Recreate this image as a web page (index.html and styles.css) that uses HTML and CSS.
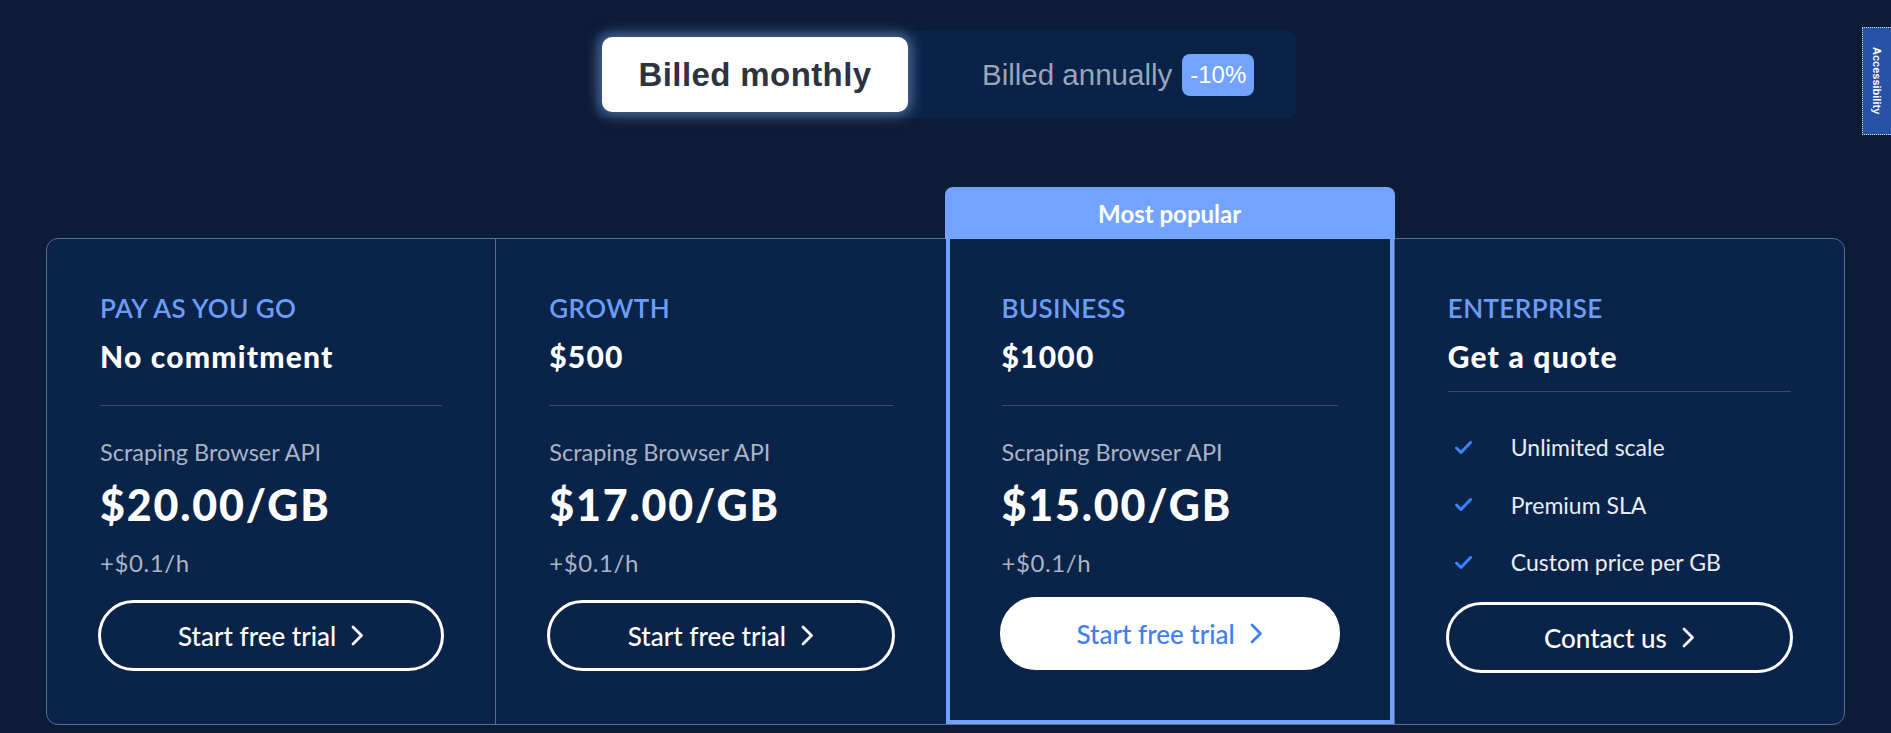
FILE: index.html
```html
<!DOCTYPE html>
<html>
<head>
  <title>Pricing</title>
  <link rel="stylesheet" href="styles.css">
</head>
<body>
  <div class="billing">
    <div class="billing-switch">
      <button class="billing-option billing-option-active">Billed monthly</button>
      <button class="billing-option billing-option-annual">
        Billed annually <span class="discount">-10%</span>
      </button>
    </div>
  </div>

  <div class="plans">
    <div class="plan">
      <div class="plan-name">PAY AS YOU GO</div>
      <div class="plan-commit">No commitment</div>
      <hr class="plan-divider">
      <div class="plan-product">Scraping Browser API</div>
      <div class="plan-price">$20.00/GB</div>
      <div class="plan-extra">+$0.1/h</div>
      <a class="plan-btn" href="#">Start free trial
        <svg width="13" height="21" viewBox="0 0 13 21"><polyline points="2,2 10.5,10.5 2,19" fill="none" stroke="currentColor" stroke-width="2.8" stroke-linecap="round" stroke-linejoin="round"/></svg>
      </a>
    </div>

    <div class="plan">
      <div class="plan-name">GROWTH</div>
      <div class="plan-commit">$500</div>
      <hr class="plan-divider">
      <div class="plan-product">Scraping Browser API</div>
      <div class="plan-price">$17.00/GB</div>
      <div class="plan-extra">+$0.1/h</div>
      <a class="plan-btn" href="#">Start free trial
        <svg width="13" height="21" viewBox="0 0 13 21"><polyline points="2,2 10.5,10.5 2,19" fill="none" stroke="currentColor" stroke-width="2.8" stroke-linecap="round" stroke-linejoin="round"/></svg>
      </a>
    </div>

    <div class="plan plan-popular">
      <div class="popular-badge">Most popular</div>
      <div class="plan-name">BUSINESS</div>
      <div class="plan-commit">$1000</div>
      <hr class="plan-divider">
      <div class="plan-product">Scraping Browser API</div>
      <div class="plan-price">$15.00/GB</div>
      <div class="plan-extra">+$0.1/h</div>
      <a class="plan-btn plan-btn-filled" href="#">Start free trial
        <svg width="13" height="21" viewBox="0 0 13 21"><polyline points="2,2 10.5,10.5 2,19" fill="none" stroke="currentColor" stroke-width="2.8" stroke-linecap="round" stroke-linejoin="round"/></svg>
      </a>
    </div>

    <div class="plan">
      <div class="plan-name">ENTERPRISE</div>
      <div class="plan-commit">Get a quote</div>
      <hr class="plan-divider plan-divider-tight">
      <ul class="features">
        <li>
          <svg width="17" height="13" viewBox="0 0 17 13"><path d="M1.5 7 L6 11.5 L15.5 1.5" fill="none" stroke="#3b82f6" stroke-width="3" stroke-linecap="round" stroke-linejoin="round"/></svg>
          Unlimited scale
        </li>
        <li>
          <svg width="17" height="13" viewBox="0 0 17 13"><path d="M1.5 7 L6 11.5 L15.5 1.5" fill="none" stroke="#3b82f6" stroke-width="3" stroke-linecap="round" stroke-linejoin="round"/></svg>
          Premium SLA
        </li>
        <li>
          <svg width="17" height="13" viewBox="0 0 17 13"><path d="M1.5 7 L6 11.5 L15.5 1.5" fill="none" stroke="#3b82f6" stroke-width="3" stroke-linecap="round" stroke-linejoin="round"/></svg>
          Custom price per GB
        </li>
      </ul>
      <a class="plan-btn plan-btn-contact" href="#">Contact us
        <svg width="13" height="21" viewBox="0 0 13 21"><polyline points="2,2 10.5,10.5 2,19" fill="none" stroke="currentColor" stroke-width="2.8" stroke-linecap="round" stroke-linejoin="round"/></svg>
      </a>
    </div>
  </div>

  <div class="a11y-tab">Accessibility</div>
</body>
</html>
```

FILE: styles.css
```css
body {
  margin: 0;
  background-color: #0c1b36;
  font-family: Lato, "Open Sans", sans-serif;
  color: #fff;
}

/* monthly / annually switch */
.billing {
  display: flex;
  justify-content: center;
  padding-top: 31px;
}

.billing-switch {
  width: 701px;
  box-sizing: border-box;
  display: flex;
  align-items: center;
  padding: 6px 7px;
  background-color: #0a2248;
  border-radius: 8px;
}

.billing-option {
  height: 75px;
  padding: 0;
  border: none;
  background: none;
  display: flex;
  align-items: center;
  white-space: nowrap;
  font-family: "Liberation Sans", Arial, sans-serif;
  font-size: 29.5px;
  color: #9aa5b8;
  cursor: pointer;
}

.billing-option-active {
  width: 306px;
  justify-content: center;
  background-color: #fff;
  color: #2d3440;
  font-size: 33px;
  font-weight: bold;
  letter-spacing: 0.4px;
  border-radius: 10px;
  box-shadow: 0 0 14px 3px rgba(150, 178, 225, 0.55);
}

.billing-option-annual {
  padding-left: 74px;
}

.discount {
  display: inline-flex;
  align-items: center;
  justify-content: center;
  width: 72px;
  height: 42px;
  margin-left: 10px;
  background-color: #74a3ff;
  border-radius: 8px;
  color: #fff;
  font-size: 24px;
}

/* plan cards */
.plans {
  width: 1799px;
  box-sizing: border-box;
  margin: 120px auto 0;
  display: grid;
  grid-template-columns: repeat(4, 1fr);
  background-color: #0a2348;
  border: 1px solid #5b6d8e;
  border-radius: 12px;
}

.plan {
  position: relative;
  display: flex;
  flex-direction: column;
  padding: 53px 53px 51px 53px;
  border-right: 1px solid #5b6d8e;
}

.plan:nth-child(2) {
  border-right: none;
}

.plan:last-child {
  border-right: none;
}

.plan-popular {
  padding-left: 56px;
  padding-right: 56px;
  box-shadow: inset 4px 0 #74a3ff, inset -4px 0 #74a3ff, inset 0 -4px #74a3ff;
}

.popular-badge {
  position: absolute;
  left: -1px;
  right: -1px;
  bottom: 100%;
  height: 52px;
  display: flex;
  align-items: center;
  justify-content: center;
  background-color: #74a3ff;
  border-radius: 8px 8px 0 0;
  font-size: 24px;
  font-weight: bold;
}

.plan-name {
  font-size: 26px;
  line-height: 32px;
  font-weight: 600;
  letter-spacing: 0.4px;
  color: #6c9ef8;
}

.plan-commit {
  margin-top: 14px;
  font-size: 30px;
  line-height: 36px;
  font-weight: 900;
  letter-spacing: 1.2px;
}

.plan-divider {
  width: 100%;
  margin: 31px 0 0;
  border: none;
  border-top: 1px solid #3a4d70;
}

.plan-divider-tight {
  margin-top: 17px;
}

.plan-product {
  margin-top: 32px;
  font-size: 23.5px;
  line-height: 28px;
  color: #a9b4c6;
}

.plan-price {
  margin-top: 14px;
  font-size: 43px;
  line-height: 50px;
  font-weight: 900;
  letter-spacing: 1.8px;
}

.plan-extra {
  margin-top: 19px;
  font-size: 24px;
  line-height: 28px;
  letter-spacing: 0.6px;
  color: #a9b4c6;
}

.plan-btn {
  margin: 23px -2px 0;
  height: 71px;
  box-sizing: border-box;
  display: flex;
  align-items: center;
  justify-content: center;
  gap: 15px;
  border: 3px solid #fff;
  border-radius: 36px;
  color: #fff;
  text-decoration: none;
  font-size: 26px;
  font-weight: 500;
}

.plan-btn-filled {
  margin-top: 20px;
  height: 73px;
  background-color: #fff;
  color: #3d80f5;
}

.plan-btn-contact {
  margin-top: 26px;
}

.features {
  list-style: none;
  margin: 41px 0 0;
  padding: 0;
  display: flex;
  flex-direction: column;
  gap: 29.5px;
}

.features li {
  display: flex;
  align-items: center;
  gap: 39px;
  padding-left: 7px;
  font-size: 23px;
  line-height: 28px;
  color: #e8edf5;
}

/* side accessibility tab */
.a11y-tab {
  position: fixed;
  top: 27px;
  right: 0;
  width: 28px;
  height: 106px;
  display: flex;
  align-items: center;
  justify-content: center;
  background-color: #2852a6;
  border: 1px dotted #cfd9ef;
  border-right: none;
  writing-mode: vertical-rl;
  font-family: "Liberation Sans", sans-serif;
  font-size: 11px;
  font-weight: bold;
}
```
